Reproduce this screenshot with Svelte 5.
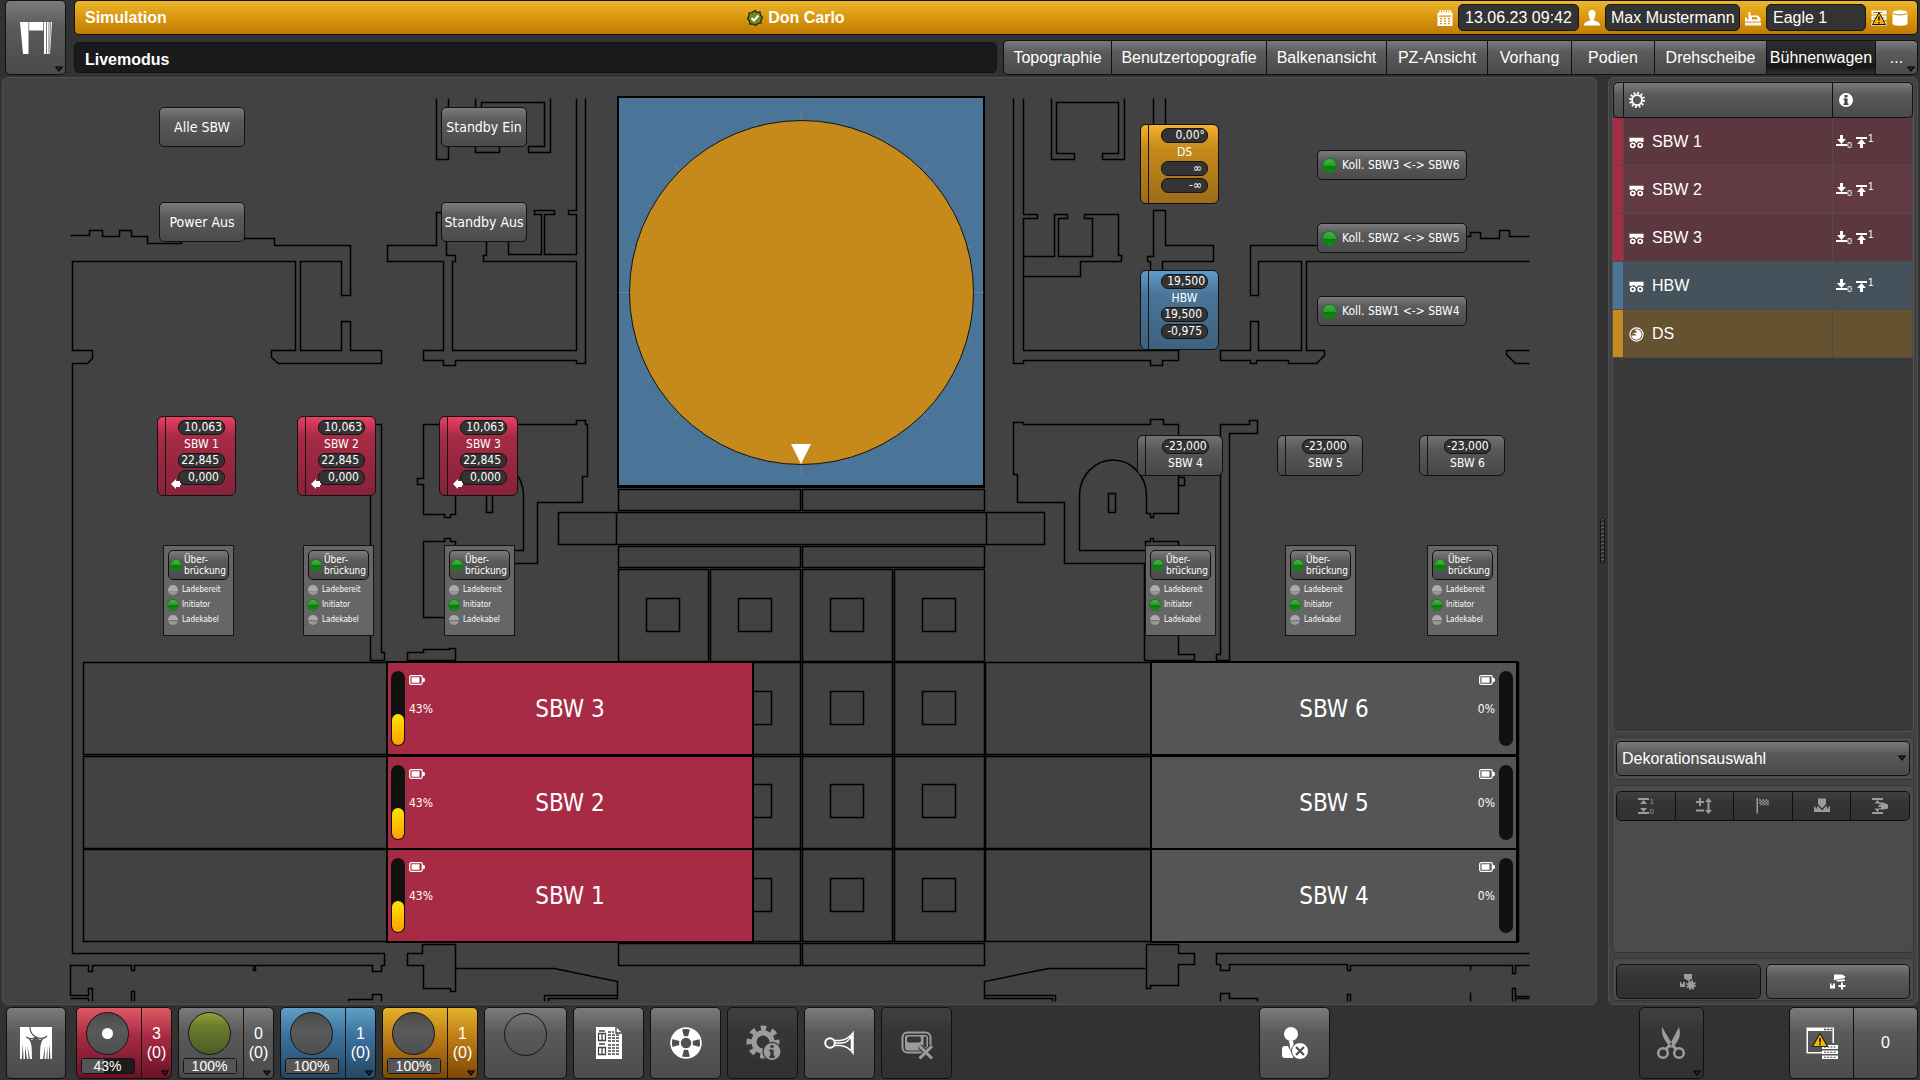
<script lang="ts">
	interface Drive {
		name: string;
		tone: 'red' | 'blue' | 'gold' | 'grey';
		x: number;
		y: number;
		values: string[];
		arrow?: boolean;
	}

	// origin of the stage plan, all plan coordinates are relative to it
	const ORIGIN_X = 3;
	const ORIGIN_Y = 78;

	const tabs = [
		{ label: 'Topographie', width: 109 },
		{ label: 'Benutzertopografie', width: 155 },
		{ label: 'Balkenansicht', width: 120 },
		{ label: 'PZ-Ansicht', width: 101 },
		{ label: 'Vorhang', width: 84 },
		{ label: 'Podien', width: 83 },
		{ label: 'Drehscheibe', width: 112 },
		{ label: 'Bühnenwagen', width: 109 },
		{ label: '...', width: 42 }
	];
	let activeTab = $state('Bühnenwagen');

	const commands = [
		{ label: 'Alle SBW', x: 159, y: 107 },
		{ label: 'Standby Ein', x: 441, y: 107 },
		{ label: 'Power Aus', x: 159, y: 202 },
		{ label: 'Standby Aus', x: 441, y: 202 }
	];

	const collisions = [
		{ label: 'Koll. SBW3 <-> SBW6', x: 1317, y: 150 },
		{ label: 'Koll. SBW2 <-> SBW5', x: 1317, y: 223 },
		{ label: 'Koll. SBW1 <-> SBW4', x: 1317, y: 296 }
	];

	const drives: Drive[] = [
		{ name: 'DS', tone: 'gold', x: 1140, y: 124, values: ['0,00°', '∞', '-∞'] },
		{ name: 'HBW', tone: 'blue', x: 1140, y: 270, values: ['19,500', '19,500', '-0,975'] },
		{ name: 'SBW 1', tone: 'red', x: 157, y: 416, values: ['10,063', '22,845', '0,000'], arrow: true },
		{ name: 'SBW 2', tone: 'red', x: 297, y: 416, values: ['10,063', '22,845', '0,000'], arrow: true },
		{ name: 'SBW 3', tone: 'red', x: 439, y: 416, values: ['10,063', '22,845', '0,000'], arrow: true },
		{ name: 'SBW 4', tone: 'grey', x: 1137, y: 435, values: ['-23,000'] },
		{ name: 'SBW 5', tone: 'grey', x: 1277, y: 435, values: ['-23,000'] },
		{ name: 'SBW 6', tone: 'grey', x: 1419, y: 435, values: ['-23,000'] }
	];

	const bridges = [163, 303, 444, 1145, 1285, 1427];
	const bridgeStates = [
		{ label: 'Ladebereit', on: false },
		{ label: 'Initiator', on: true },
		{ label: 'Ladekabel', on: false }
	];

	const wagons = [
		{ name: 'SBW 3', charge: 43, x: 386, y: 661, side: 'left' },
		{ name: 'SBW 2', charge: 43, x: 386, y: 755, side: 'left' },
		{ name: 'SBW 1', charge: 43, x: 386, y: 848, side: 'left' },
		{ name: 'SBW 6', charge: 0, x: 1150, y: 661, side: 'right' },
		{ name: 'SBW 5', charge: 0, x: 1150, y: 755, side: 'right' },
		{ name: 'SBW 4', charge: 0, x: 1150, y: 848, side: 'right' }
	];

	const rows = [
		{ name: 'SBW 1', tone: 'red', icon: 'wagon', limits: true },
		{ name: 'SBW 2', tone: 'red', icon: 'wagon', limits: true },
		{ name: 'SBW 3', tone: 'red', icon: 'wagon', limits: true },
		{ name: 'HBW', tone: 'blue', icon: 'wagon', limits: true },
		{ name: 'DS', tone: 'gold', icon: 'disc', limits: false }
	];

	const playbacks = [
		{ tone: 'red', percent: 43, count: 3, queued: 0, dot: true },
		{ tone: 'green', percent: 100, count: 0, queued: 0, dot: false },
		{ tone: 'blue', percent: 100, count: 1, queued: 0, dot: false },
		{ tone: 'gold', percent: 100, count: 1, queued: 0, dot: false }
	];

	const modes = ['limits', 'relative', 'flag', 'scale', 'manual'];
	const modeLabels = ['Endlagen', 'Relativ', 'Ziel', 'Skala', 'Manuell'];

	// turntable tick marks every 15 degrees
	const ticks = Array.from({ length: 24 }, (_, i) => {
		const angle = i * 15;
		return { angle, length: angle % 90 === 0 ? 10 : angle % 45 === 0 ? 7 : 4 };
	});

	const trapColumns = [755, 847, 939];
	const trapRows = [708, 801, 895];

	const walls = [
		'M437 98V159H449V98',
		'M476 98V152H500V146M482 120V102H545V146H529V152H551V98',
		'M577 98V210H569V214H577V254H545V214H555V210H535V214H542V254H509V236M586 98V363H577V360H456V365H444V360H424V350H444V261H388V245H437V212H446',
		'M447 236V255H456V261H453V350H577V261H484V255H487V236',
		'M71 235H90V230H103V236H120V230H132V236H148V243H182V236M244 238H275V245H351V295H342V261H301V350H342V321H351V350H382V363H279L272 357V350H296V261H73V350H93V358L88 363H73V953H385V965H382V971H373V965H256V970H254V965H135V970H132V965H93V971H89V965H71V995H89V988H93V1001',
		'M71 998H89V1001M132 1001V991H135V1001M349 1001V999H373V994H382V1001',
		'M375 424H382V652H385V660H371V490',
		'M446 424H424V478H418V484H424V514H445V517H451V514H456V490',
		'M456 546V541H451V538H445V541H424V617H446',
		'M515 424H577V420H586V424H588V476H583V502H538V563H512',
		'M510 550H524V495A33 35 0 0 0 490 460M487 490V512H493V490',
		'M408 652H424V649H450V648H456V660H408Z',
		'M423 944H456V991H451V988H424V965H408V953H423Z',
		'M456 968H555L618 981V998H549V1001M545 1001V995H618',
		'M1014 98V363H1024V360H1151V365H1163V360H1179V350H1024V276H1081V261H1122V255H1119V214H1085V218H1093V256H1059V218H1068V214H1055V256H1024M1024 98V214H1038V218H1024V276',
		'M1052 98V159H1075V153H1057V102H1119V153H1103V159H1125V98M1154 98V126M1166 98V126',
		'M1151 272V261H1148V256H1154V210H1166V245H1214V261H1163V272',
		'M1317 245H1251V295H1259V261H1302V350H1259V321H1251V350H1221V360H1251V363H1257V360H1289V363H1317L1325 355V350H1307V261H1530',
		'M1466 236H1471V232H1481V238H1500V230H1510V236H1530M1530 350H1507V354L1516 363H1530',
		'M1146 563H1065V502H1018V474H1014V422H1024V424H1151V419H1164V424H1179V513H1154V517H1151V513H1147V495A33 35 0 0 0 1080 495V550H1146M1179 477H1185V485H1179',
		'M1109 493H1116V512H1109Z',
		'M1146 546V541H1151V538H1154V541H1179V654H1195V660H1145V563',
		'M1221 424H1250V420H1258V433H1230V660H1217V654H1221Z',
		'M1147 988V944H1179V953H1195V964H1179V985H1151V988Z',
		'M1146 968H1049L985 981V998H1053V1001M985 995H1056V1001',
		'M1530 953H1217V964H1221V970H1230V964H1348V970H1351V965H1513V973H1516V965H1530M1471 965V970',
		'M1221 1001V993H1230V998H1258V1001M1348 1001V994H1351V1001M1471 992V1001M1513 1001V988H1516V996H1530M1516 1001V998H1530'
	];

	const decks = [
		'M619 489H801V510H619ZM803 489H985V510H803Z',
		'M559 512H1045V544H559ZM617 512V544M987 512V544',
		'M619 546H801V567H619ZM803 546H985V567H803Z',
		'M619 569H709V661H619ZM711 569H801V661H711ZM803 569H893V661H803ZM895 569H985V661H895Z',
		'M84 662H1519V754H84ZM84 756H1519V848H84ZM84 849H1519V941H84Z',
		'M801 662V941M803 662V941M893 662V941M895 662V941M985 662V941M986 662V941',
		'M619 943H801V965H619ZM803 943H985V965H803Z'
	];
</script>

{#snippet led(on: boolean)}
	<i class="led" class:on></i>
{/snippet}

{#snippet corner()}
	<svg class="corner" viewBox="0 0 8 6" width="8" height="6" aria-hidden="true"><path d="M1 1H7L4 5Z" fill="#333" stroke="#000" stroke-width="1.2" /></svg>
{/snippet}

{#snippet battery()}
	<svg width="16" height="10" viewBox="0 0 16 10" aria-hidden="true">
		<rect x=".7" y=".7" width="12.6" height="8.6" rx="1.5" fill="none" stroke="#fff" stroke-width="1.3" />
		<path d="M2.500 2.300H10.500V7.700H2.500ZM14 3H15Q16 3 16 5T15 7H14Z" fill="#fff" />
	</svg>
{/snippet}

{#snippet icon(name: string, size: number)}
	<svg class="icon" width={size} height={size} viewBox="0 0 32 32" fill="currentColor" aria-hidden="true">
		{#if name === 'stage'}
			<path d="M0 0H8.500V32H3ZM9.200 0H23.300V8.500H9.200ZM24 0H26.200V32H24ZM27 0H28.600V32H27ZM29.300 0H30.100V10L29.300 32ZM30.800 0H32L30 32H29.300L30.600 10Z" />
		{:else if name === 'curtain'}
			<path d="M0 0H32V32H30.500L29.500 17 28.800 32H27.500V19L26.300 32H24.500L25 19 23 32H20C20.500 22 19 16 25 10L20 13 16 9.500 12 13 7 10C13 16 11.500 22 12 32H10L7.500 19 8.500 32H7L5 19V32H3.500L2.800 17 1.800 32H0Z" />
			<path d="M10 0C10 5 12 8 16 10C13 12 9 12 6 10M16 10C20 12 24 12 27 9" fill="none" stroke="#505050" stroke-width="1.2" />
		{:else if name === 'cal'}
			<path d="M2 5H5V0H8V5H10V0H13V5H15V0H18V5H20V0H23V5H25V0H28V5H31V32H1V5Z" />
			<path d="M4 12H28M6 17H10M14 17H18M22 17H26M6 22H10M14 22H18M22 22H26M6 27H10M14 27H18M22 27H26" stroke="#d6930f" stroke-width="2.500" />
		{:else if name === 'user'}
			<path d="M16 0C23 0 24 6 22 13C21 17 20 18 20 21C27 23 32 25 32 31H0C0 25 5 23 12 21C12 18 11 17 10 13C8 6 9 0 16 0Z" />
		{:else if name === 'desk'}
			<path d="M7 4H11V11H26L31 17V23H0V15H4V19H7ZM14 14V19H26L23 14ZM0 25H32V31H0Z" fill-rule="evenodd" />
			<path d="M2 28H30" stroke="#d6930f" stroke-width="1" stroke-dasharray="4 3" />
		{:else if name === 'serverwarn'}
			<path d="M1 1H31V9H1ZM1 11H31V20H1ZM1 23H31V31H1Z" />
			<path d="M4 5H22M4 16H28M4 27H28" stroke="#c9890c" stroke-width="2" />
			<path d="M16 5L29 29H3Z" fill="#f7b500" stroke="#111" stroke-width="2" />
			<path d="M16 13V21M16 24V27" stroke="#111" stroke-width="3" />
		{:else if name === 'db'}
			<path d="M1 5C1-1 31-1 31 5V27C31 33 1 33 1 27Z" />
			<path d="M1 6C4 11 28 11 31 6" fill="none" stroke="#c9890c" stroke-width="2" />
		{:else if name === 'check'}
			<path d="M16 1L20 5 26 4 27 10 31 15 28 20 28 26 22 27 17 31 12 28 6 28 5 22 1 17 4 12 4 6 10 5Z" fill="#6d8a1c" stroke="#222" stroke-width="2.500" />
			<path d="M9 16L14 21 23 11" fill="none" stroke="#fff" stroke-width="4" />
		{:else if name === 'gear'}
			<circle cx="16" cy="16" r="10" fill="none" stroke="currentColor" stroke-width="3.500" />
			<circle cx="16" cy="16" r="13.500" fill="none" stroke="currentColor" stroke-width="5" stroke-dasharray="3.535 3.535" />
		{:else if name === 'info'}
			<circle cx="16" cy="16" r="14" />
			<path d="M13 6H19V11H13ZM11 13H19V23H21V26H11V23H13V16H11Z" fill="#444" />
		{:else if name === 'wagon'}
			<path d="M1 6H31V15H27A7 7 0 0 0 16 18A7 7 0 0 0 5 15H1Z" />
			<circle cx="8" cy="22" r="4.500" fill="none" stroke="currentColor" stroke-width="3.500" />
			<circle cx="24" cy="22" r="4.500" fill="none" stroke="currentColor" stroke-width="3.500" />
		{:else if name === 'disc'}
			<circle cx="16" cy="16" r="14" fill="none" stroke="currentColor" stroke-width="2.500" />
			<path d="M16 5A11 11 0 1 1 5 18H16L11 14 5 14A11 11 0 0 0 10 12H16V8H11A11 11 0 0 1 16 5Z" />
		{:else if name === 'list'}
			<path d="M3 0H23L29 6V32H3Z" />
			<path d="M23 0V6H29M6 4H12M6 17H12M5.500 6.500H12.500V13.500H5.500ZM5.500 20.500H12.500V27.500H5.500ZM9 7V13M9 21V27" fill="none" stroke="#444" stroke-width="1.300" />
			<path d="M15 5H21M15 8H27M15 11H27M15 14H27M15 18H27M15 21H27M15 24H27M15 27H27" stroke="#444" stroke-width="1.300" stroke-dasharray="3 1" />
		{:else if name === 'ring'}
			<circle cx="16" cy="16" r="10.500" fill="none" stroke="currentColor" stroke-width="10" />
			<path d="M12 2L20 2 18 9.500H14ZM12 30L20 30 18 22.500H14ZM2 12V20L9.500 18V14ZM30 12V20L22.500 18V14Z" fill="#505050" />
			<circle cx="16" cy="16" r="14.800" fill="none" stroke="currentColor" stroke-width="1.500" />
			<circle cx="16" cy="16" r="6" fill="#505050" stroke="currentColor" stroke-width="1.500" />
		{:else if name === 'gearinfo'}
			<circle cx="16" cy="15" r="8.500" fill="none" stroke="currentColor" stroke-width="5" />
			<circle cx="16" cy="15" r="13" fill="none" stroke="currentColor" stroke-width="5" stroke-dasharray="5.105 5.105" stroke-dashoffset="2.500" />
			<circle cx="24.500" cy="24" r="8.500" stroke="#353535" stroke-width="1.200" />
			<path d="M23 18H26V20.500H23ZM22 22H26V28H27V30H22V28H23V24H22Z" fill="#353535" />
		{:else if name === 'horn'}
			<circle cx="6" cy="16" r="4.800" fill="none" stroke="currentColor" stroke-width="2" />
			<path d="M10.500 13.500H16C22 13 26 10 29 6V26C26 22 22 19 16 18.500H10.500M17 16C23 16 26 12 27.500 9V23M17 16H10" fill="none" stroke="currentColor" stroke-width="1.500" />
		{:else if name === 'drivex'}
			<rect x="1.500" y="5.500" width="28" height="20" rx="5" fill="none" stroke="currentColor" stroke-width="2" />
			<rect x="4" y="8" width="23" height="15.500" rx="3" />
			<rect x="6" y="9.500" width="14" height="6" rx="2" fill="#353535" /><rect x="22.500" y="9.500" width="3" height="11" rx="1" fill="#353535" />
			<path d="M18.500 19L31 31.500M31 19L18.500 31.500" stroke="#353535" stroke-width="5" /><path d="M18.500 19L31 31.500M31 19L18.500 31.500" stroke="currentColor" stroke-width="3" />
		{:else if name === 'stickx'}
			<circle cx="12" cy="7" r="7" /><path d="M10 14H14L16 25H12Z" /><path d="M6 19H9L12 25H16L14 31H6Q3 31 3 28V22Q3 19 6 19Z" />
			<circle cx="21" cy="24" r="8.500" stroke="#505050" /><path d="M17 20L25 28M25 20L17 28" stroke="#505050" stroke-width="2.200" />
		{:else if name === 'cut'}
			<path d="M6 0L18 20 15 21C8 13 5 8 6 0ZM23 0L14 17 16 21C24 13 25 8 23 0Z" />
			<circle cx="7" cy="26" r="4.800" fill="none" stroke="currentColor" stroke-width="2.500" /><circle cx="23" cy="26" r="4.800" fill="none" stroke="currentColor" stroke-width="2.500" />
			<path d="M10 22L15 17M20 22L15 17" stroke="currentColor" stroke-width="3" /><circle cx="15" cy="17" r="1" fill="#333" />
		{:else if name === 'winwarn'}
			<path d="M.5 .5H28V16H26.500V4H2V25H17V26.500H.5Z" /><path d="M18 2.500H27" stroke="#444" stroke-width="1.500" stroke-dasharray="2.200 1" />
			<path d="M16 18H32V22H16ZM16 23.500H32V27H16ZM16 28.500H32V32H16Z" /><path d="M18 20H30M18 25.300H30M18 30.300H30" stroke="#444" stroke-dasharray="2 1.200" />
			<path d="M14 6.500L21.500 19.500H6.500Z" fill="#f7b500" stroke="#222" stroke-width="1.200" /><path d="M14 11V15.500M14 16.500V18.300" stroke="#111" stroke-width="1.600" />
		{:else if name === 'limits'}
			<path d="M0 0H22V4H0ZM11 4L18 12H4ZM0 28H22V32H0ZM11 28L18 20H4Z" />
			<text x="23" y="12" font-size="16">1</text><text x="23" y="31" font-size="16">0</text>
		{:else if name === 'relative'}
			<path d="M0 6H6V0H10V6H16V10H10V16H6V10H0ZM0 23H16V27H0ZM25 0L32 8H27V24H32L25 32 18 24H23V8H18Z" />
		{:else if name === 'flag'}
			<path d="M3 0H6V31H3Z" /><path d="M8 4H28M11 7H28M8 10H28M11 13H28" stroke="currentColor" stroke-width="3" stroke-dasharray="3.500 3" />
		{:else if name === 'scale'}
			<path d="M8 1H24V12L16 21 8 12ZM0 17H3V21H6V17H9L16 25 23 17H26V21H29V17H32V28H0Z" />
		{:else if name === 'manual'}
			<path d="M0 0H22V4H0ZM11 4L17 11H5ZM0 28H22V32H0ZM11 28L17 21H5ZM14 9H22L32 13V21L24 23H14V20H18V18H12V15H17V13H14Z" />
		{:else if name === 'scalegear'}
			<path d="M8 0H24V10L16 13 8 9ZM0 16H3V20H6V16H10V26H0Z" />
			<circle cx="22" cy="22" r="7" /><circle cx="22" cy="22" r="8" fill="none" stroke="currentColor" stroke-width="4" stroke-dasharray="3.140 3.140" />
		{:else if name === 'scaleadd'}
			<path d="M8 1H24L31 5 28 9 15 10 8 13ZM14 11H30V14L22 15 13 15ZM0 19H3V23H6V19H10V29H0Z" />
			<path d="M22 17H26V22H31V26H26V31H22V26H17V22H22Z" />
		{/if}
	</svg>
{/snippet}

<div class="app">
	<header>
		<button class="btn menu" aria-label="Hauptmenü">{@render icon('stage', 32)}{@render corner()}</button>
		<div class="bars">
			<div class="titlebar">
				<strong>Simulation</strong>
				<strong class="show">{@render icon('check', 16)}Don Carlo</strong>
				<div class="status">
					{@render icon('cal', 16)}<time class="box date">13.06.23 09:42</time>
					{@render icon('user', 16)}<span class="box person">Max Mustermann</span>
					{@render icon('desk', 16)}<span class="box desk">Eagle 1</span>
					{@render icon('serverwarn', 16)}
					{@render icon('db', 16)}
				</div>
			</div>
			<div class="navrow">
				<strong class="live">Livemodus</strong>
				<nav>
					{#each tabs as tab}
						<button class="btn" class:active={activeTab === tab.label} style:width="{tab.width}px" onclick={() => (activeTab = tab.label)}>
							{tab.label}
							{#if tab.label === '...'}{@render corner()}{/if}
						</button>
					{/each}
				</nav>
			</div>
		</div>
	</header>

	<main>
		<section class="stage">
			<svg class="plan" viewBox="3 78 1593 926" width="1593" height="926" aria-hidden="true">
				<g fill="none" stroke="#000" stroke-width="1.500" transform="translate(-.5 .5)">
					{#each walls as d}<path {d} />{/each}
					{#each decks as d}<path {d} />{/each}
					{#each [664, 756, 848, 940] as cx}
						<rect x={cx - 17} y="598" width="33" height="33" />
					{/each}
					{#each trapRows as cy}
						{#each trapColumns as cx}
							<rect x={cx - 16} y={cy - 17} width="33" height="33" />
						{/each}
					{/each}
				</g>
				<rect x="618" y="97" width="366" height="389" fill="#4a7598" stroke="#000" stroke-width="2" />
				<path d="M617 487H985" stroke="#000" stroke-width="2" />
				{#each ticks as tick}
					<path d="M801 {120 - tick.length}V120" stroke="#71818c" transform="rotate({tick.angle} 801 292.500)" />
				{/each}
				<circle cx="801.500" cy="292.500" r="172" fill="#c6891b" stroke="#111" />
				<path d="M791 444H811L801 464Z" fill="#fff" />
			</svg>

			{#each commands as item}
				<button class="btn command placed" style:left="{item.x - ORIGIN_X}px" style:top="{item.y - ORIGIN_Y}px">{item.label}</button>
			{/each}

			{#each collisions as item}
				<button class="btn collision placed" style:left="{item.x - ORIGIN_X}px" style:top="{item.y - ORIGIN_Y}px">{@render led(true)}{item.label}</button>
			{/each}

			{#each drives as drive}
				<button class="drive placed {drive.tone}" style:left="{drive.x - ORIGIN_X}px" style:top="{drive.y - ORIGIN_Y}px">
					<span class="value">{drive.values[0]}</span>
					<span class="name">{drive.name}</span>
					{#each drive.values.slice(1) as value}<span class="value low">{value}</span>{/each}
					{#if drive.arrow}
						<svg class="arrow" width="10" height="10" viewBox="0 0 10 10" aria-hidden="true"><path d="M0 5L5 0V2H9V4H10V6H9V8H5V10Z" fill="#fff" /></svg>
					{/if}
				</button>
			{/each}

			{#each bridges as x}
				<div class="bridge placed" style:left="{x - ORIGIN_X}px" style:top="{545 - ORIGIN_Y}px">
					<button class="btn">{@render led(true)}<span>Über-<br />brückung</span></button>
					<ul>
						{#each bridgeStates as state}<li>{@render led(state.on)}{state.label}</li>{/each}
					</ul>
				</div>
			{/each}

			{#each wagons as wagon}
				<div class="wagon placed {wagon.side}" style:left="{wagon.x - ORIGIN_X}px" style:top="{wagon.y - ORIGIN_Y}px">
					<div class="gauge">
						{#if wagon.charge}<i style:height="{wagon.charge}%"></i>{/if}
					</div>
					<div class="charge">{@render battery()}<span>{wagon.charge}%</span></div>
					<h2>{wagon.name}</h2>
				</div>
			{/each}
		</section>

		<div class="splitter"><i></i></div>

		<aside>
			<div class="list">
				<table>
					<thead>
						<tr><th class="mark" aria-label="Farbe"></th><th>{@render icon('gear', 16)}</th><th class="limit">{@render icon('info', 16)}</th></tr>
					</thead>
					<tbody>
						{#each rows as row}
							<tr class={row.tone}>
								<td class="mark"></td>
								<td><span class="cell">{@render icon(row.icon, 15)}{row.name}</span></td>
								<td class="limit">
									{#if row.limits}
										<svg width="38" height="16" viewBox="0 0 38 16" fill="#fff" aria-hidden="true">
											<path d="M4 1H7V5H10L5.500 10 1 5H4ZM0 10H11V12H0ZM20 3H31V5H20ZM25.500 5L30 10H27V14H24V10H21Z" />
											<text x="11" y="14" font-size="9">0</text><text x="32" y="8" font-size="10">1</text>
										</svg>
									{/if}
								</td>
							</tr>
						{/each}
					</tbody>
				</table>
			</div>
			<div class="group">
				<div class="select">
					<select class="btn" aria-label="Dekorationsauswahl"><option>Dekorationsauswahl</option></select>
					{@render corner()}
				</div>
			</div>
			<div class="group detail">
				<div class="modes">
					{#each modes as mode, i}<button class="btn" disabled aria-label={modeLabels[i]}>{@render icon(mode, 16)}</button>{/each}
				</div>
			</div>
			<div class="group pair">
				<button class="btn" disabled aria-label="Dekoration bearbeiten">{@render icon('scalegear', 16)}</button>
				<button class="btn" aria-label="Dekoration hinzufügen">{@render icon('scaleadd', 16)}</button>
			</div>
		</aside>
	</main>

	<footer>
		<button class="btn curtain" aria-label="Vorhang">{@render icon('curtain', 32)}</button>
		{#each playbacks as pb}
			<button class="btn playback {pb.tone}">
				<span class="dial">
					<i class="round" class:dot={pb.dot}></i>
					<span class="percent"><i style:width="{pb.percent}%"></i><b>{pb.percent}%</b></span>
				</span>
				<span class="count">{pb.count}<br />({pb.queued})</span>
				{@render corner()}
			</button>
		{/each}
		<button class="btn empty" aria-label="Leer"><i class="round"></i></button>
		<button class="btn tool" aria-label="Protokoll">{@render icon('list', 32)}</button>
		<button class="btn tool" aria-label="Hilfe">{@render icon('ring', 32)}</button>
		<button class="btn tool" disabled aria-label="Systeminfo">{@render icon('gearinfo', 34)}</button>
		<button class="btn tool" aria-label="Hupe">{@render icon('horn', 32)}</button>
		<button class="btn tool" disabled aria-label="Antrieb abwählen">{@render icon('drivex', 32)}</button>
		<button class="btn tool stick" aria-label="Joystick lösen">{@render icon('stickx', 32)}</button>
		<button class="btn cut" disabled aria-label="Ausschneiden">{@render icon('cut', 32)}{@render corner()}</button>
		<div class="alarms">
			<button class="btn" aria-label="Meldungen">{@render icon('winwarn', 32)}</button>
			<button class="btn">0</button>
		</div>
	</footer>
</div>

<style>
	:global(body) {
		margin: 0;
		background: #323232;
	}

	.app {
		--plan-font: 'DejaVu Sans Condensed', 'Noto Sans', sans-serif;
		display: grid;
		grid-template-rows: auto 1fr auto;
		min-height: 100vh;
		box-sizing: border-box;
		background: #323232;
		color: #fff;
		font: 16px/20px 'Liberation Sans', Arial, sans-serif;
	}
	.app :where(*) {
		box-sizing: border-box;
	}

	svg { display: block; flex: none; overflow: visible; }
	svg text { font-family: 'Liberation Sans', Arial, sans-serif; }

	/* --- Buttons --- */
	.btn {
		position: relative;
		display: flex;
		align-items: center;
		justify-content: center;
		padding: 0;
		border: 1px solid #111;
		border-radius: 5px;
		background: linear-gradient(#7b7b7b, #5a5a5a 35%, #4b4b4b);
		color: #fff;
		font: inherit;
		cursor: pointer;
	}
	.btn:disabled {
		background: linear-gradient(#404040, #353535 35%, #303030);
		color: #9c9c9c;
		cursor: default;
	}
	.corner {
		position: absolute;
		right: 2px;
		bottom: 2px;
	}

	/* --- Header --- */
	header {
		display: flex;
		gap: 8px;
		height: 77px;
		padding: 0 2px 2px 5px;
	}
	.menu { width: 61px; }
	.bars {
		flex: 1;
		display: flex;
		flex-direction: column;
		gap: 5px;
	}
	.titlebar {
		display: grid;
		grid-template-columns: auto 1fr auto;
		align-items: center;
		height: 35px;
		padding: 0 9px 0 10px;
		border: 1px solid #111;
		border-radius: 5px;
		background: linear-gradient(#ecb62b, #d9970f 50%, #c07c02);
		white-space: nowrap;
	}
	.show, .status {
		display: flex;
		align-items: center;
		gap: 5px;
	}
	.show { justify-content: center; }
	.status { margin-left: 12px; }
	.box {
		height: 27px;
		padding: 0 5px;
		border: 1px solid #151515;
		border-radius: 5px;
		background: #333;
		line-height: 25px;
		text-align: center;
	}
	.date { width: 121px; }
	.person { width: 135px; }
	.desk { width: 100px; padding: 0 6px; text-align: left; }
	.navrow {
		display: flex;
		align-items: center;
		gap: 6px;
	}
	.live {
		flex: 1;
		height: 31px;
		padding: 0 10px;
		border: 1px solid #131313;
		border-radius: 5px;
		background: #1a1a1a;
		line-height: 33px;
	}
	nav { display: flex; }
	nav .btn {
		height: 35px;
		border-left-width: 0;
		border-radius: 0;
		white-space: nowrap;
	}
	nav .btn:first-child { border-left-width: 1px; border-radius: 5px 0 0 5px; }
	nav .btn:last-child { border-radius: 0 5px 5px 0; }
	nav .btn.active { background: linear-gradient(#2e2e2e, #1f1f1f 65%, #141414 75%, #303030); }

	/* --- Main --- */
	main {
		display: flex;
		padding: 0 2px;
	}
	.stage {
		position: relative;
		flex: 1;
		min-width: 0;
		min-height: 928px;
		overflow: hidden;
		border: 1px solid #505050;
		border-radius: 6px;
		background: #424242;
		font-family: var(--plan-font);
	}
	.placed { position: absolute; }
	.plan { position: absolute; left: 0; top: 0; }
	.command {
		width: 86px;
		height: 40px;
		font-size: 14px;
		white-space: nowrap;
	}
	.collision {
		justify-content: flex-start;
		gap: 6px;
		width: 150px;
		height: 30px;
		padding-left: 5px;
		font-size: 12px;
		white-space: nowrap;
	}
	.led {
		flex: none;
		width: 10px;
		height: 10px;
		border-radius: 50%;
		background: linear-gradient(#aaa 55%, #777 55%, #999 70%);
	}
	.led.on {
		background: linear-gradient(#44b244, #2a9c2a 50%, #067a06 50%, #0c930c);
		box-shadow: 0 0 1px 1px #1c7a1c;
	}
	.collision .led { width: 13px; height: 13px; }

	.drive {
		display: flex;
		flex-direction: column;
		align-items: flex-start;
		width: 79px;
		height: 80px;
		padding: 3px 0 0 20px;
		border: 1px solid #111;
		border-radius: 6px;
		color: #fff;
		font: 12px/15px var(--plan-font);
	}
	.drive::before {
		content: '';
		position: absolute;
		inset: 0 auto 0 7px;
		width: 1px;
		background: #151515;
	}
	.drive.red { background: linear-gradient(#ec3f65, #a72b44 25%, #86223a); }
	.drive.blue { background: linear-gradient(#5d9bce, #4a7598 30%, #3d6180); }
	.drive.gold { background: linear-gradient(#f8b02f, #c6891b 30%, #9d6c17); }
	.drive.grey {
		width: 86px;
		height: 41px;
		padding-left: 24px;
		background: linear-gradient(#727272, #585858 35%, #484848);
	}
	.value {
		width: 47px;
		height: 15px;
		padding: 0 2px;
		border: 1px solid #151515;
		border-radius: 7px;
		background: #333;
		line-height: 13px;
		text-align: right;
	}
	.value.low { margin-bottom: 2px; padding-right: 5px; }
	.name {
		width: 47px;
		height: 18px;
		line-height: 18px;
		text-align: center;
		white-space: nowrap;
	}
	.arrow {
		position: absolute;
		left: 13px;
		top: 62px;
	}

	.bridge {
		width: 71px;
		height: 91px;
		padding: 4px;
		border: 1px solid #151515;
		background: #666;
	}
	.bridge .btn {
		gap: 3px;
		width: 61px;
		height: 30px;
		font-size: 10px;
		line-height: 11px;
		text-align: left;
	}
	ul {
		margin: 2px 0 0;
		padding: 0;
		list-style: none;
		font-size: 8px;
		line-height: 15px;
	}
	li {
		display: flex;
		align-items: center;
		gap: 4px;
	}

	.wagon {
		display: grid;
		grid-template-columns: auto auto 1fr;
		gap: 4px;
		width: 368px;
		height: 95px;
		padding: 8px 3px;
		border: 2px solid #000;
	}
	.wagon.left { background: #a72b44; }
	.wagon.right { grid-template-columns: 1fr auto auto; background: #555; }
	.gauge {
		display: flex;
		flex-direction: column;
		justify-content: flex-end;
		grid-area: 1 / 1;
		width: 14px;
		height: 75px;
		padding: 1px;
		border-radius: 7px;
		background: #111;
	}
	.gauge i {
		border-radius: 6px;
		background: linear-gradient(#ffe400, #fca000);
	}
	.charge {
		display: flex;
		flex-direction: column;
		gap: 14px;
		grid-area: 1 / 2;
		padding-top: 4px;
		font-size: 12px;
	}
	.right .charge { align-items: flex-end; }
	.right .gauge { grid-column: 3; }
	h2 {
		grid-area: 1 / 1 / 2 / 4;
		place-self: center;
		margin: 0;
		font-size: 24px;
		font-weight: 400;
		line-height: 30px;
	}

	.splitter {
		display: flex;
		align-items: center;
		justify-content: center;
		width: 11px;
	}
	.splitter i {
		width: 5px;
		height: 46px;
		border: 1px solid #151515;
		border-radius: 3px;
		background: repeating-linear-gradient(#666 0 1px, #333 1px 4px);
	}

	/* --- Right side --- */
	aside {
		display: flex;
		flex-direction: column;
		gap: 5px;
		width: 310px;
		padding: 3px;
		border: 1px solid #505050;
		border-radius: 6px;
		background: #424242;
	}
	.list {
		flex: 1;
		border: 1px solid #505050;
		border-radius: 5px;
		background: #3a3a3a;
	}
	table {
		width: 100%;
		border-spacing: 0;
		table-layout: fixed;
	}
	th {
		height: 36px;
		padding: 0 5px;
		border: 1px solid #111;
		border-left-width: 0;
		background: linear-gradient(#7b7b7b, #5a5a5a 35%, #4b4b4b);
	}
	th:first-child { border-left-width: 1px; border-radius: 5px 0 0 5px; }
	th:last-child { border-radius: 0 5px 5px 0; }
	td {
		height: 48px;
		padding: 1px 5px 0;
		border: solid #4c4c4c;
		border-width: 0 1px 1px 0;
	}
	.mark { width: 11px; padding: 0; }
	.limit { width: 80px; }
	td.limit { padding: 1px 3px 0; }
	.cell {
		display: flex;
		align-items: center;
		gap: 8px;
	}
	tr.red td { background: #5c373f; }
	tr.red:nth-child(2) td { background: #613a43; }
	tr.red .mark, tr.red:nth-child(2) .mark { background: #a72b44; }
	tr.blue td { background: #45525c; }
	tr.blue .mark { background: #4a7598; }
	tr.gold td { background: #655230; }
	tr.gold .mark { background: #c6891b; }

	.group {
		padding: 3px;
		border: 1px solid #363636;
		border-radius: 5px;
		background: #4b4b4b;
	}
	.select { position: relative; }
	.select .corner { right: 4px; bottom: 15px; }
	select.btn {
		width: 100%;
		height: 35px;
		padding: 0 5px;
		appearance: none;
	}
	.detail { height: 168px; padding-top: 5px; }
	.modes { display: flex; }
	.modes .btn {
		flex: 1;
		height: 30px;
		border-left-width: 0;
		border-radius: 0;
	}
	.modes .btn:first-child { border-left-width: 1px; border-radius: 5px 0 0 5px; }
	.modes .btn:last-child { border-radius: 0 5px 5px 0; }
	.pair {
		display: flex;
		gap: 5px;
		padding: 5px 3px 1px;
	}
	.pair .btn { flex: 1; height: 35px; }

	/* --- Footer --- */
	footer {
		display: flex;
		gap: 6px;
		padding: 2px 2px 1px 6px;
	}
	footer .btn { height: 72px; }
	.curtain { width: 60px; margin-right: 4px; }
	.playback {
		align-items: stretch;
		width: 96px;
	}
	.dial {
		display: flex;
		flex-direction: column;
		align-items: center;
		justify-content: space-between;
		width: 65px;
		padding: 4px 3px 4px 0;
		border-right: 1px solid #151515;
	}
	.round {
		display: flex;
		align-items: center;
		justify-content: center;
		width: 43px;
		height: 43px;
		border: 1px solid #151515;
		border-radius: 50%;
		background: linear-gradient(#4a4a4a, #5a5a5a 40%, #4f4f4f);
	}
	.round.dot::after {
		content: '';
		width: 11px;
		height: 11px;
		border-radius: 50%;
		background: #fff;
	}
	.percent {
		position: relative;
		width: 54px;
		height: 16px;
		border: 1px solid #151515;
		border-radius: 3px;
		background: #1c1c1c;
		font-size: 14px;
		line-height: 15px;
	}
	.percent i {
		position: absolute;
		inset: 0 auto 0 0;
		background: #555;
	}
	.percent b { position: relative; font-weight: 400; }
	.count {
		flex: 1;
		align-self: center;
		line-height: 19px;
	}
	.playback.red { background: linear-gradient(#de5a63, #a82b45 40%, #6b1226); }
	.playback.blue { background: linear-gradient(#5f9fc4, #3c719c 40%, #234766); }
	.playback.gold { background: linear-gradient(#e2b32c, #c17f17 40%, #7d4806); }
	.playback.green .round { background: linear-gradient(#93a13d, #6b7f2c 30%, #4d5c26); }
	.empty {
		width: 83px;
		padding-bottom: 18px;
	}
	.empty .round { background: none; }
	.tool { width: 71px; }
	.stick { margin-left: auto; }
	.cut { width: 65px; margin-left: 303px; }
	.alarms {
		display: flex;
		margin-left: 79px;
	}
	.alarms .btn { width: 65px; border-radius: 5px 0 0 5px; }
	.alarms .btn:last-child { width: 64px; border-left-width: 0; border-radius: 0 5px 5px 0; }
</style>
